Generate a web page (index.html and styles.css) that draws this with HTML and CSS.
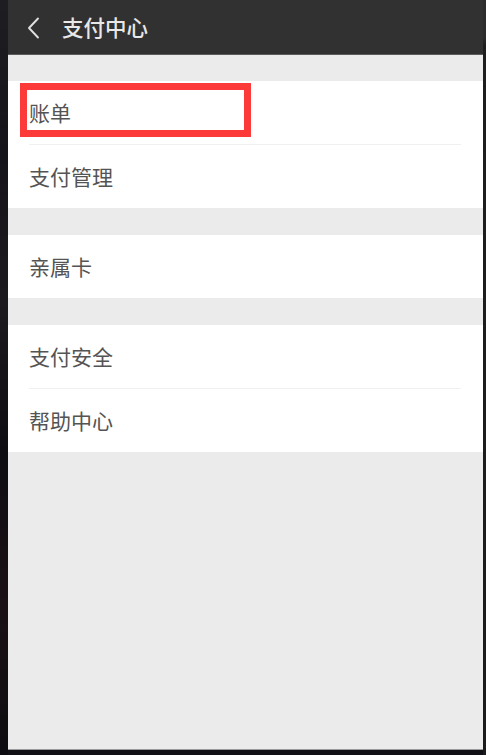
FILE: index.html
```html
<!DOCTYPE html>
<html lang="zh-CN">
<head>
<meta charset="utf-8">
<title>支付中心</title>
<link rel="stylesheet" href="styles.css">
</head>
<body>
<div class="frame">
  <div class="edge-left"></div>
  <div class="screen">
    <header class="topbar">
      <svg class="back" width="14" height="22" viewBox="0 0 14 22"><path d="M12 1.5 L3 11 L12 20.5" fill="none" stroke="#e0e0e0" stroke-width="1.9" stroke-linecap="round" stroke-linejoin="round"/></svg>
      <h1 class="title">支付中心</h1>
    </header>
    <main class="content">
      <section class="group">
        <div class="row row-marked">
          <span class="label">账单</span>
          <div class="mark"></div>
        </div>
        <div class="row"><span class="label">支付管理</span></div>
      </section>
      <section class="group">
        <div class="row"><span class="label">亲属卡</span></div>
      </section>
      <section class="group">
        <div class="row"><span class="label">支付安全</span></div>
        <div class="row"><span class="label">帮助中心</span></div>
      </section>
    </main>
  </div>
  <div class="edge-right"></div>
</div>
</body>
</html>
```

FILE: styles.css
```css
html, body {
  margin: 0;
  padding: 0;
  background: #111014;
  width: 486px;
  height: 755px;
  overflow: hidden;
  font-family: "Noto Sans CJK SC", "Noto Sans", sans-serif;
}

.frame {
  display: flex;
  width: 486px;
  height: 755px;
}

.edge-left {
  width: 8px;
  flex: none;
  background: linear-gradient(180deg, #1e1e22 0%, #15141a 20%, #1d1a1f 40%, #0e0d12 60%, #1a1015 80%, #0d0c10 100%);
}

.edge-right {
  width: 3px;
  flex: none;
  background: linear-gradient(180deg, #2c2c2c 0%, #2c2c2c 5%, #1e1e1e 6%, #1b1b1b 100%);
}

.screen {
  width: 475px;
  height: 750px;
  flex: none;
  background: #ebebeb;
  display: flex;
  flex-direction: column;
  border-bottom: 1px solid #9a9a9a;
  box-sizing: border-box;
}

.topbar {
  height: 55px;
  flex: none;
  box-sizing: border-box;
  background: #313131;
  border-bottom: 1px solid #5c5c5c;
  display: flex;
  align-items: center;
  padding-left: 18px;
}

.back {
  display: block;
  margin-top: 1px;
}

.title {
  margin: 0 0 0 22px;
  font-size: 21.5px;
  font-weight: 500;
  color: #e8e8e8;
  letter-spacing: 0;
  line-height: 1;
}

.content {
  display: flex;
  flex-direction: column;
  gap: 27px;
  padding-top: 26px;
}

.group {
  background: #ffffff;
  display: flex;
  flex-direction: column;
}

.row {
  height: 63px;
  display: flex;
  align-items: center;
  padding-left: 21px;
  position: relative;
}

.row + .row {
  border-top: 1px solid transparent;
}

.row + .row::before {
  content: "";
  position: absolute;
  top: -1px;
  left: 21px;
  right: 22px;
  height: 1px;
  background: #f0f0f0;
}

.label {
  font-size: 21px;
  color: #545454;
  line-height: 1;
}

.mark {
  position: absolute;
  left: 12px;
  top: 2px;
  width: 231px;
  height: 54px;
  box-sizing: border-box;
  border: 7px solid #fd3a3a;
}
```
